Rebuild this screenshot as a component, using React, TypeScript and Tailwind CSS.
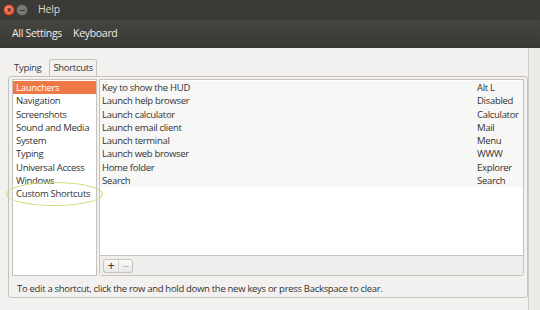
import React from 'react';

const categories = [
  'Launchers',
  'Navigation',
  'Screenshots',
  'Sound and Media',
  'System',
  'Typing',
  'Universal Access',
  'Windows',
  'Custom Shortcuts',
];

const shortcuts: [string, string][] = [
  ['Key to show the HUD', 'Alt L'],
  ['Launch help browser', 'Disabled'],
  ['Launch calculator', 'Calculator'],
  ['Launch email client', 'Mail'],
  ['Launch terminal', 'Menu'],
  ['Launch web browser', 'WWW'],
  ['Home folder', 'Explorer'],
  ['Search', 'Search'],
];

export default function App() {
  return (
    <div className="w-[540px] h-[310px] bg-[#f2f1f0] flex flex-col overflow-hidden text-[9.5px] tracking-[-0.3px] text-[#333] font-['Open_Sans','Noto_Sans',sans-serif]">
      {/* title bar */}
      <div className="h-[20px] bg-[#3b3a36] flex items-center pl-[3px]">
        <div className="w-[12px] h-[12px] rounded-full bg-[radial-gradient(circle_at_40%_35%,#f58a6a,#df4b26)] border border-[#7a2a14] flex items-center justify-center text-[8px] leading-none text-[#3a1a10] font-bold tracking-normal">
          ×
        </div>
        <div className="w-[12px] h-[12px] ml-[1px] rounded-full bg-[#7a7975] border border-[#4a4945] flex items-center justify-center">
          <div className="w-[5px] h-[1px] bg-[#3b3a36]" />
        </div>
        <span className="ml-[10px] text-[10.5px] tracking-[-0.2px] text-[#dfdbd2]">Help</span>
      </div>

      {/* toolbar */}
      <div className="h-[28px] bg-gradient-to-b from-[#45443f] to-[#3a3935] flex items-center pl-[12px] gap-[11px] text-[10.5px] tracking-[-0.3px] text-[#f0ede6]">
        <span>All Settings</span>
        <span>Keyboard</span>
      </div>

      <div className="flex-1 flex">
        <div className="w-[528px] flex flex-col pl-[8px] pt-[11px]">
          {/* tabs */}
          <div className="flex items-end h-[17px] pl-[3px]">
            <span className="px-[3px] pb-[1px] text-[#3c3c3c]">Typing</span>
            <span className="ml-[5px] h-[17px] px-[3px] pt-[1px] border border-b-0 border-[#c6c3bd] rounded-t-[3px] bg-[#f2f1f0]">
              Shortcuts
            </span>
          </div>

          {/* notebook panel */}
          <div className="h-[222px] border border-[#c6c3bd] rounded-[3px] flex flex-col px-[3px] pt-[2px]">
            <div className="flex gap-[2px] h-[197px]">
              {/* categories */}
              <div className="w-[85px] bg-white border border-[#c6c3bd] pt-[1px]">
                {categories.map((c, i) => (
                  <div
                    key={c}
                    className={`relative h-[13.3px] leading-[13.3px] pl-[3px] whitespace-nowrap ${
                      i === 0 ? 'bg-[#f07746] text-white' : ''
                    }`}
                  >
                    {c}
                    {c === 'Custom Shortcuts' && (
                      <span className="absolute left-[-7px] top-[-5px] w-[97px] h-[24px] rounded-[50%] border-[1.5px] border-[#bfe070]" />
                    )}
                  </div>
                ))}
              </div>

              {/* shortcuts */}
              <div className="flex-1 flex flex-col border border-[#c6c3bd] rounded-b-[3px]">
                <div className="h-[176px] bg-white border-b border-[#c6c3bd] pt-[1px]">
                  <div className="bg-[#f7f7f6]">
                    {shortcuts.map(([name, key]) => (
                      <div key={name} className="flex h-[13.3px] leading-[13.3px] pl-[2px]">
                        <span className="flex-1 whitespace-nowrap">{name}</span>
                        <span className="w-[46px] whitespace-nowrap">{key}</span>
                      </div>
                    ))}
                  </div>
                </div>
                <div className="flex-1 bg-[#efeeed] flex items-center pl-[3px]">
                  <div className="flex h-[14px] border border-[#c6c3bd] rounded-[3px] bg-gradient-to-b from-[#fafaf9] to-[#e9e8e6]">
                    <span className="w-[14px] flex items-center justify-center text-[12px] leading-none text-[#333]">+</span>
                    <span className="w-[14px] flex items-center justify-center text-[11px] leading-none text-[#aaa] border-l border-[#d8d6d2]">−</span>
                  </div>
                </div>
              </div>
            </div>
            <div className="pl-[5px] pt-[6px] whitespace-nowrap">
              To edit a shortcut, click the row and hold down the new keys or press Backspace to clear.
            </div>
          </div>
        </div>
        <div className="flex-1 border-l border-[#cfccc6] bg-[#ebeae8]" />
      </div>
    </div>
  );
}
